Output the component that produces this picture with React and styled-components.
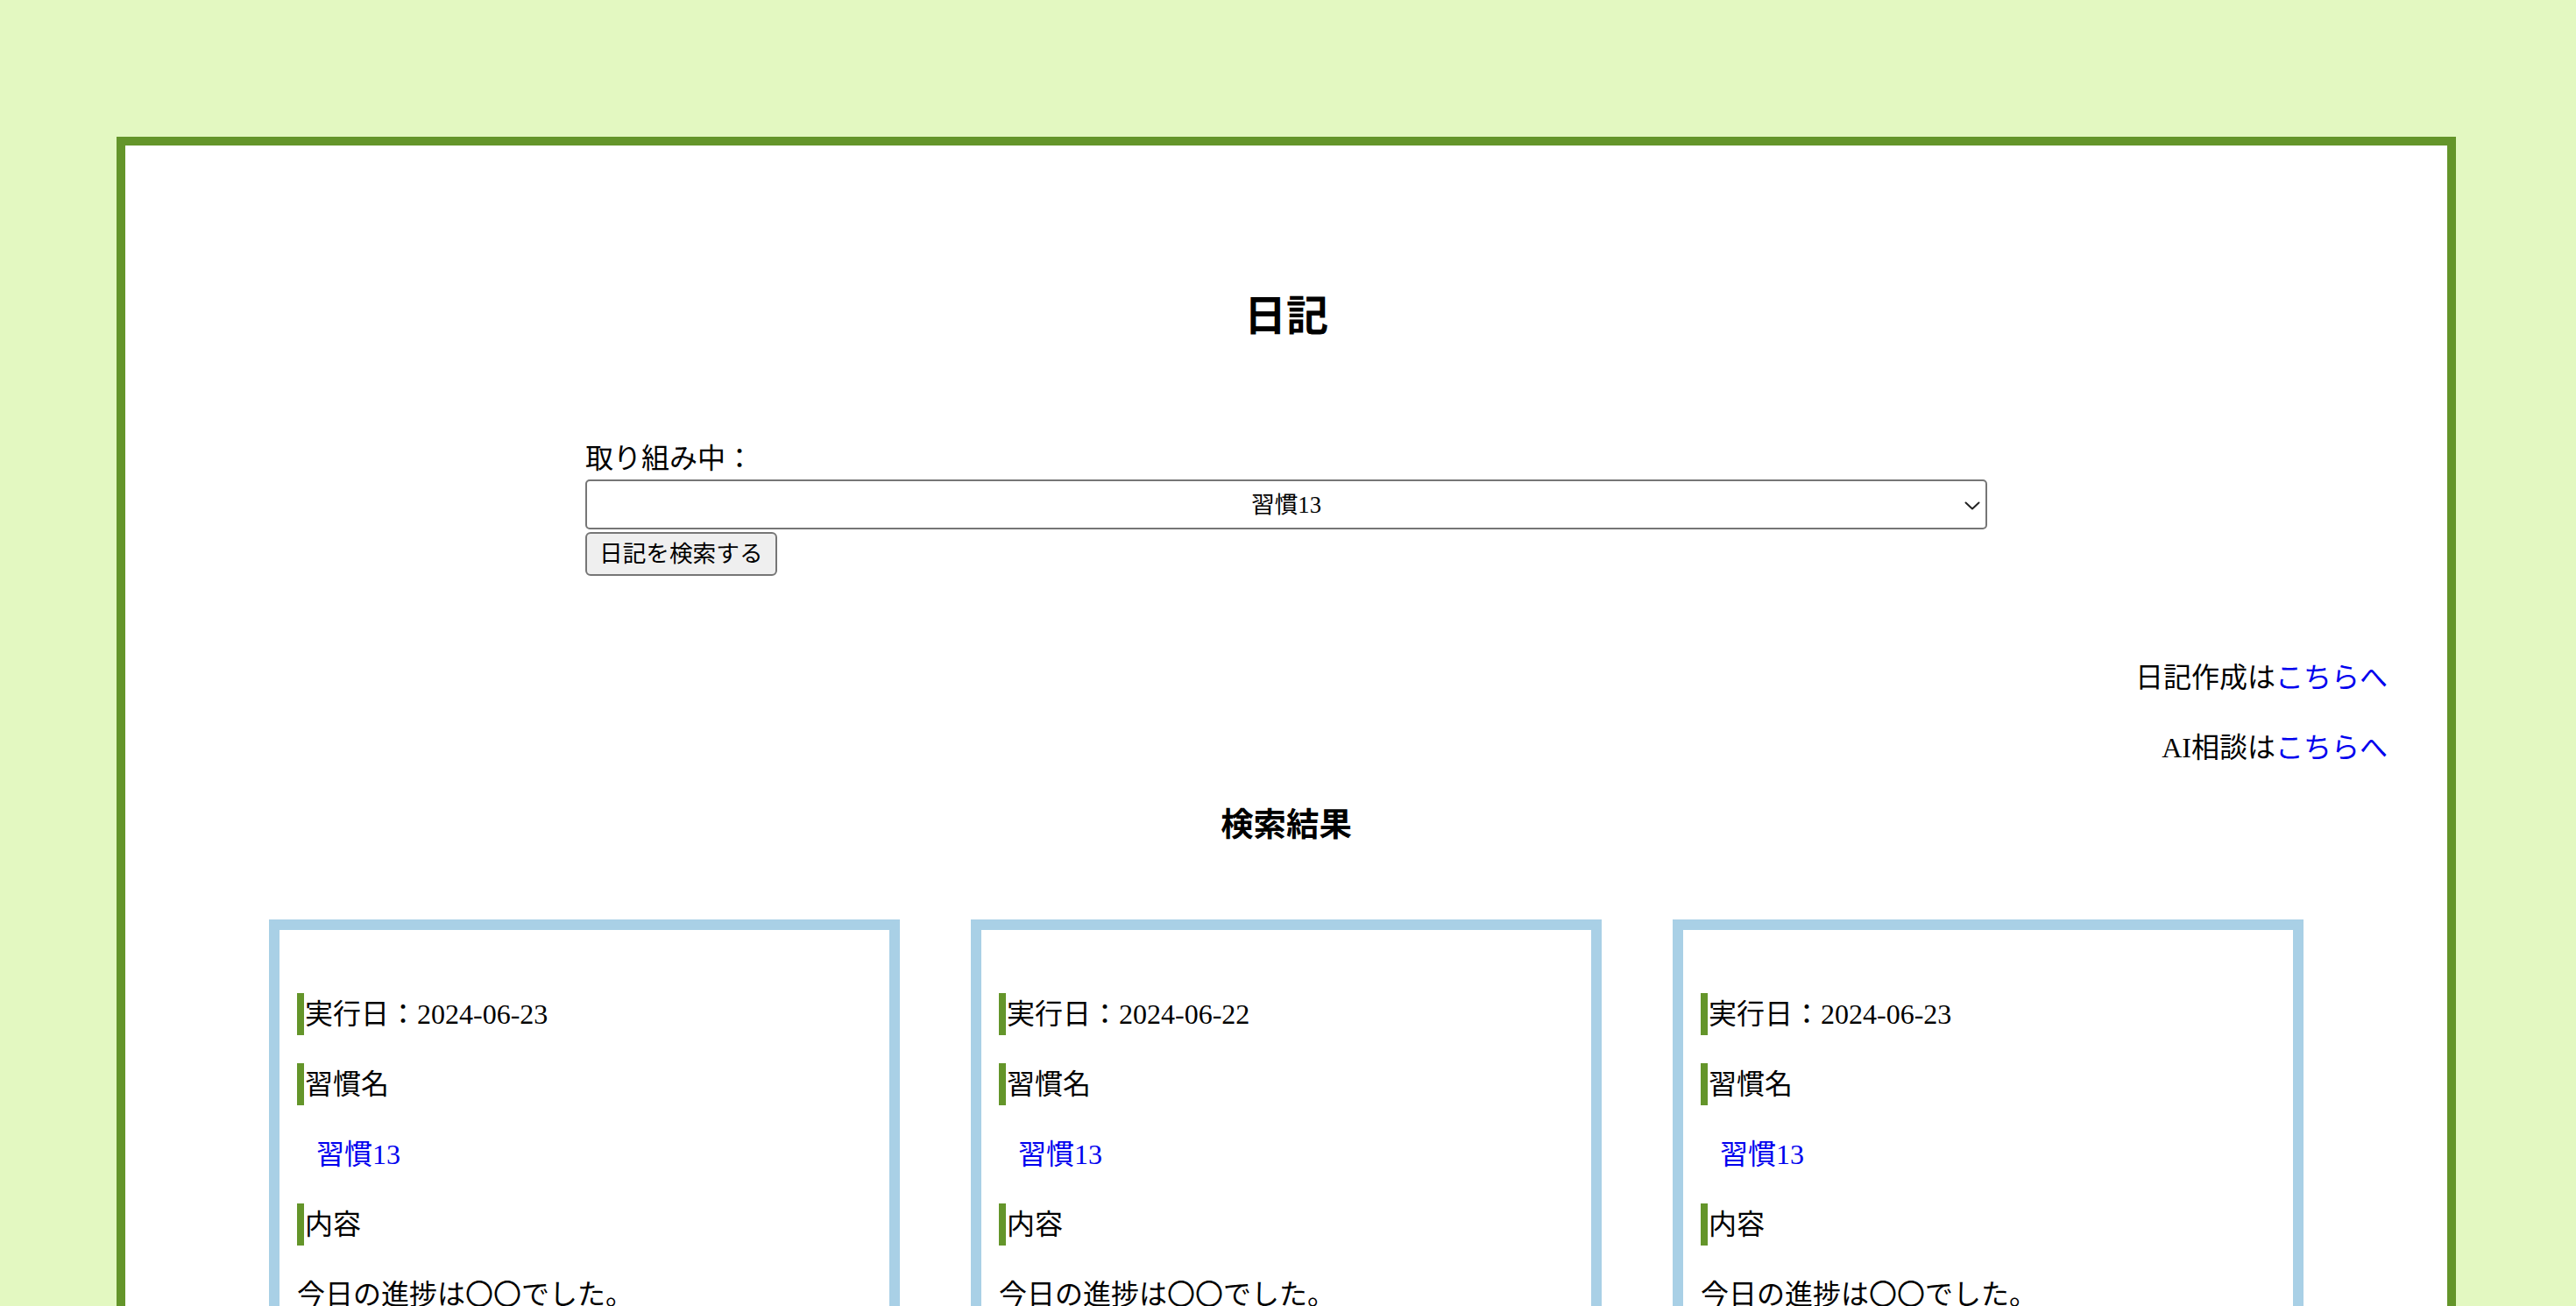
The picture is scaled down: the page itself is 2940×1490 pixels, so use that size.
import React from "react";
import styled, { createGlobalStyle } from "styled-components";

const GlobalStyle = createGlobalStyle`
  html, body {
    margin: 0;
    padding: 0;
    background: #e3f8c1;
  }
  body {
    font-family: "Liberation Serif", "Noto Sans CJK JP", serif;
    color: #000;
  }
`;

const Page = styled.div`
  padding-top: 156px;
  height: 1334px;
  overflow: hidden;
`;

const Frame = styled.main`
  box-sizing: border-box;
  width: 2670px;
  min-height: 1400px;
  margin-left: 133px;
  background: #fff;
  border: 10px solid #64952a;
  padding: 0 68px;
  display: flex;
  flex-direction: column;
`;

const Title = styled.h2`
  margin: 171px 0 0;
  font-size: 48px;
  line-height: 48px;
  font-weight: 700;
  text-align: center;
`;

const Form = styled.form`
  width: 1600px;
  margin: 114px auto 0;
  display: flex;
  flex-direction: column;
  align-items: flex-start;
`;

const Label = styled.label`
  font-size: 32px;
  line-height: 48px;
`;

const SelectWrap = styled.div`
  position: relative;
  width: 1600px;
`;

const Select = styled.select`
  appearance: none;
  -webkit-appearance: none;
  box-sizing: border-box;
  width: 100%;
  height: 57px;
  display: block;
  background: #fff;
  border: 2px solid #767676;
  border-radius: 5px;
  font-family: "Liberation Serif", "Noto Sans CJK JP", serif;
  font-size: 26.67px;
  color: #000;
  text-align: center;
  text-align-last: center;
  padding: 0 40px;
`;

const Chevron = styled.svg`
  position: absolute;
  right: 8px;
  top: 25px;
  width: 18px;
  height: 10px;
  pointer-events: none;
`;

const Button = styled.button`
  box-sizing: border-box;
  margin-top: 3px;
  height: 50px;
  padding: 0 14px;
  background: #efefef;
  border: 2px solid #767676;
  border-radius: 6px;
  font-family: "Liberation Serif", "Noto Sans CJK JP", serif;
  font-size: 26.67px;
  line-height: 1;
  color: #000;
`;

const Links = styled.div`
  margin-top: 92px;
  display: flex;
  flex-direction: column;
  align-items: flex-end;
  gap: 32px;
`;

const LinkLine = styled.p`
  margin: 0;
  font-size: 32px;
  line-height: 48px;
`;

const A = styled.a`
  color: #0000ee;
  text-decoration: none;
`;

const SectionTitle = styled.h3`
  margin: 41px 0 0;
  font-size: 37.44px;
  line-height: 48px;
  font-weight: 700;
  text-align: center;
`;

const Grid = styled.div`
  margin-top: 83px;
  display: grid;
  grid-template-columns: repeat(3, 720px);
  column-gap: 81px;
  justify-content: center;
`;

const Card = styled.article`
  box-sizing: border-box;
  border: 12px solid #a9d0e6;
  padding: 72px 20px 40px;
  display: flex;
  flex-direction: column;
  gap: 32px;
  min-height: 600px;
`;

const Line = styled.p`
  margin: 0;
  font-size: 32px;
  line-height: 48px;
  padding-left: ${(p) => (p.$indent ? "22px" : "0")};
  ${(p) =>
    p.$mark &&
    `
    border-left: 8px solid #64952a;
    padding-left: 1px;
  `}
`;

const cards = [
  { date: "2024-06-23", habit: "習慣13", body: "今日の進捗は〇〇でした。" },
  { date: "2024-06-22", habit: "習慣13", body: "今日の進捗は〇〇でした。" },
  { date: "2024-06-23", habit: "習慣13", body: "今日の進捗は〇〇でした。" },
];

export default function App() {
  return (
    <>
      <GlobalStyle />
      <Page>
        <Frame>
          <Title>日記</Title>
          <Form onSubmit={(e) => e.preventDefault()}>
            <Label htmlFor="habit">取り組み中：</Label>
            <SelectWrap>
              <Select id="habit" defaultValue="13">
                <option value="13">習慣13</option>
              </Select>
              <Chevron viewBox="0 0 18 10">
                <path
                  d="M1.5 1.5 L9 8.5 L16.5 1.5"
                  fill="none"
                  stroke="#222"
                  strokeWidth="2"
                  strokeLinecap="round"
                  strokeLinejoin="round"
                />
              </Chevron>
            </SelectWrap>
            <Button type="submit">日記を検索する</Button>
          </Form>
          <Links>
            <LinkLine>
              日記作成は<A href="#">こちらへ</A>
            </LinkLine>
            <LinkLine>
              AI相談は<A href="#">こちらへ</A>
            </LinkLine>
          </Links>
          <SectionTitle>検索結果</SectionTitle>
          <Grid>
            {cards.map((c, i) => (
              <Card key={i}>
                <Line $mark>実行日：{c.date}</Line>
                <Line $mark>習慣名</Line>
                <Line $indent>
                  <A href="#">{c.habit}</A>
                </Line>
                <Line $mark>内容</Line>
                <Line>{c.body}</Line>
              </Card>
            ))}
          </Grid>
        </Frame>
      </Page>
    </>
  );
}
